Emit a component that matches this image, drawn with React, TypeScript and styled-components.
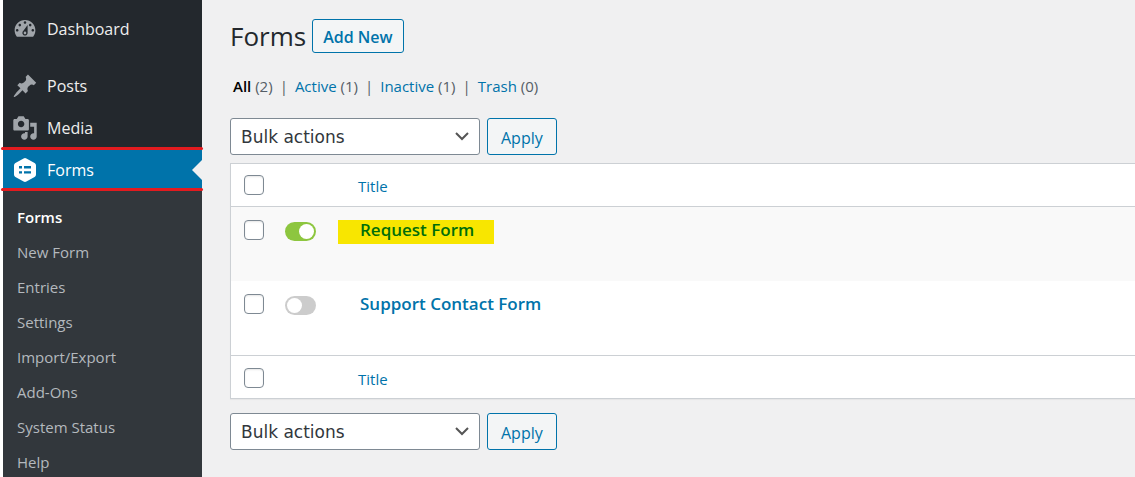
import React from "react";
import styled, { createGlobalStyle, css } from "styled-components";

const blue = "#0073aa";
const line = "#ccd0d4";
const page = "#f0f0f1";

const GlobalStyle = createGlobalStyle`
  *, *::before, *::after { box-sizing: border-box; }
  body {
    margin: 0;
    background: ${page};
    color: #23282d;
    font: 15px/20px "Segoe UI", "Open Sans", "Noto Sans", sans-serif;
  }
  a { color: inherit; text-decoration: none; }
  ul { list-style: none; margin: 0; padding: 0; }
`;

const Shell = styled.div`
  display: flex;
  min-height: 100vh;
`;

const Sidebar = styled.nav`
  display: flex;
  flex-direction: column;
  flex: 0 0 202px;
  border-left: 3px solid #fff;
  background: #23282d;
`;

const Menu = styled.ul`
  padding-top: 8px;
`;

const MenuItem = styled.li<{ $spaced?: boolean }>`
  margin-bottom: ${(p) => (p.$spaced ? 15 : 0)}px;
`;

const MenuLink = styled.a<{ $current?: boolean }>`
  position: relative;
  display: flex;
  align-items: center;
  gap: 9px;
  height: 42px;
  padding-left: 9px;
  color: #eee;
  font-size: 16px;

  svg {
    width: 26px;
    height: 26px;
    fill: #a0a5aa;
  }

  ${(p) =>
    p.$current &&
    css`
      background: ${blue};
      color: #fff;
      svg { fill: #fff; }
    `}
`;

const Notch = styled.span`
  position: absolute;
  right: 0;
  top: 11px;
  border: 10px solid transparent;
  border-left-width: 0;
  border-right-color: ${page};
`;

const Marker = styled.span<{ $edge: "top" | "bottom" }>`
  position: absolute;
  left: -2px;
  right: -1px;
  ${(p) => p.$edge}: ${(p) => (p.$edge === "top" ? -2 : 0)}px;
  height: 3px;
  border-radius: 2px;
  background: #e21b1f;
`;

const SubMenu = styled.ul`
  display: flex;
  flex: 1;
  flex-direction: column;
  gap: 14px;
  padding: 16px 0 0 14px;
  background: #32373c;
`;

const SubLink = styled.a<{ $current?: boolean }>`
  display: block;
  line-height: 21px;
  color: ${(p) => (p.$current ? "#fff" : "#b4b9be")};
  font-weight: ${(p) => (p.$current ? 600 : 400)};
`;

const Content = styled.main`
  flex: 1;
  min-width: 0;
  padding: 19px 0 0 28px;
`;

const Heading = styled.header`
  display: flex;
  align-items: center;
  gap: 6px;
`;

const Title = styled.h1`
  margin: 0;
  font-size: 26px;
  font-weight: 400;
  line-height: 34px;
`;

const OutlineButton = styled.button<{ $strong?: boolean }>`
  height: ${(p) => (p.$strong ? 34 : 37)}px;
  padding: 2px ${(p) => (p.$strong ? 10 : 13)}px 0;
  border: 1px solid ${blue};
  border-radius: 3px;
  background: #f3f5f6;
  color: ${blue};
  font: ${(p) => (p.$strong ? 600 : 400)} 16px/20px "Segoe UI", "Open Sans", "Noto Sans", sans-serif;
`;

const Filters = styled.ul`
  display: flex;
  margin: 23px 0 22px;
  padding-left: 3px;
  font-size: 15px;
`;

const Filter = styled.li`
  color: #555d66;
  &:not(:last-child)::after {
    content: "|";
    margin: 0 7px;
  }
`;

const FilterLink = styled.a<{ $current?: boolean }>`
  color: ${(p) => (p.$current ? "#000" : blue)};
  font-weight: ${(p) => (p.$current ? 600 : 400)};
`;

const Actions = styled.div`
  display: flex;
  gap: 7px;
`;

const SelectBox = styled.div`
  position: relative;
  width: 250px;

  svg {
    position: absolute;
    right: 10px;
    top: 10px;
    pointer-events: none;
  }
`;

const Select = styled.select`
  appearance: none;
  width: 100%;
  height: 37px;
  padding: 0 32px 0 10px;
  border: 1px solid #7e8993;
  border-radius: 3px;
  background: #fff;
  color: #32373c;
  font: 17px/24px Verdana, "DejaVu Sans", sans-serif;
`;

const Table = styled.table`
  width: 100%;
  margin: 8px 0 14px;
  border: 1px solid ${line};
  border-right: 0;
  border-spacing: 0;
  background: #fff;
  table-layout: fixed;
  box-shadow: 0 1px 1px rgba(0, 0, 0, 0.04);

  th, td { padding: 0; text-align: left; font-weight: 400; }
  thead th { height: 43px; border-bottom: 1px solid ${line}; }
  tfoot th { height: 43px; padding-top: 1px; border-top: 1px solid ${line}; }
  tbody td { height: 74px; padding-top: 13px; vertical-align: top; }
  tbody tr:nth-child(odd) { background: #f9f9f9; }
`;

const CheckCol = styled.col`
  width: 54px;
`;
const ToggleCol = styled.col`
  width: 53px;
`;

const Checkbox = styled.input`
  appearance: none;
  display: block;
  width: 20px;
  height: 20px;
  margin: 0 0 0 13px;
  border: 1px solid #7e8993;
  border-radius: 4px;
  background: #fff;
  box-shadow: inset 0 1px 2px rgba(0, 0, 0, 0.1);
`;

const Toggle = styled.input`
  appearance: none;
  display: block;
  width: 31px;
  height: 19px;
  margin: 2px 0 0;
  padding: 2px;
  border-radius: 10px;
  background: #ccc;

  &::before {
    content: "";
    display: block;
    width: 15px;
    height: 15px;
    border-radius: 50%;
    background: #fff;
  }
  &:checked { background: #8dc63f; }
  &:checked::before { margin-left: auto; }
`;

const ColumnLink = styled.a`
  display: block;
  padding: 2px 0 0 20px;
  color: ${blue};
`;

const FormLink = styled.a<{ $highlight?: boolean }>`
  display: inline-block;
  padding: 0 20px 4px 22px;
  background: ${(p) => (p.$highlight ? "#f8e600" : "transparent")};
  color: ${(p) => (p.$highlight ? "#006e0a" : blue)};
  font-size: 17px;
  font-weight: 600;
`;

const DashboardIcon = () => (
  <svg viewBox="0 0 20 20" aria-hidden="true">
    <path fillRule="evenodd" d="M3.76 16h12.48c1.1-1.37 1.76-3.11 1.76-5 0-4.42-3.58-8-8-8s-8 3.58-8 8c0 1.89.66 3.63 1.76 5zM10 4c.55 0 1 .45 1 1s-.45 1-1 1-1-.45-1-1 .45-1 1-1zM6 6c.55 0 1 .45 1 1s-.45 1-1 1-1-.45-1-1 .45-1 1-1zm8 0c.55 0 1 .45 1 1s-.45 1-1 1-1-.45-1-1 .45-1 1-1zm-5.37 5.55L12 7v6c0 1.1-.9 2-2 2s-2-.9-2-2c0-.57.24-1.08.63-1.45zM4 10c.55 0 1 .45 1 1s-.45 1-1 1-1-.45-1-1 .45-1 1-1zm12 0c.55 0 1 .45 1 1s-.45 1-1 1-1-.45-1-1 .45-1 1-1zm-5 3c0-.55-.45-1-1-1s-1 .45-1 1 .45 1 1 1 1-.45 1-1z" />
  </svg>
);

const PinIcon = () => (
  <svg viewBox="0 0 20 20" aria-hidden="true">
    <path d="M10.44 3.02l1.82-1.82 6.36 6.35-1.83 1.82c-1.05-.68-2.48-.57-3.41.36l-.75.75c-.92.93-1.04 2.35-.35 3.41l-1.83 1.82-2.41-2.41-2.8 2.79c-.42.42-3.38 2.71-3.8 2.29s1.86-3.39 2.28-3.81l2.79-2.79L4.1 9.36l1.83-1.82c1.05.69 2.48.57 3.4-.36l.75-.75c.93-.92 1.05-2.35.36-3.41z" />
  </svg>
);

const MediaIcon = () => (
  <svg viewBox="0 0 20 20" aria-hidden="true">
    <path fillRule="evenodd" d="M13 11V4c0-.55-.45-1-1-1h-1.67L9 1H5L3.67 3H2c-.55 0-1 .45-1 1v7c0 .55.45 1 1 1h10c.55 0 1-.45 1-1zM7 4.5c1.38 0 2.5 1.12 2.5 2.5S8.38 9.5 7 9.5 4.5 8.38 4.5 7 5.62 4.5 7 4.5zM14 6h5v10.5c0 1.38-1.12 2.5-2.5 2.5S14 17.88 14 16.5s1.12-2.5 2.5-2.5c.17 0 .34.02.5.05V9h-3V6zm-4 8.05V13h2v3.5c0 1.38-1.12 2.5-2.5 2.5S7 17.88 7 16.5 8.12 14 9.5 14c.17 0 .34.02.5.05z" />
  </svg>
);

const FormsIcon = () => (
  <svg viewBox="0 0 26 26" aria-hidden="true">
    <path d="M11.6 1.4q1.4-.8 2.8 0l8.2 4.7q1.4.8 1.4 2.4v9q0 1.6-1.4 2.4l-8.2 4.7q-1.4.8-2.8 0l-8.2-4.7Q2 19.100 2 17.500v-9q0-1.600 1.400-2.400z" />
    <path fill={blue} d="M7 9h3v2.400H7zM12 9h7v2.400h-7zM7 14.200h3v2.400H7zM12 14.200h7v2.400h-7z" />
  </svg>
);

const submenu = ["Forms", "New Form", "Entries", "Settings", "Import/Export", "Add-Ons", "System Status", "Help"];

const filters = [
  { label: "All", count: 2 },
  { label: "Active", count: 1 },
  { label: "Inactive", count: 1 },
  { label: "Trash", count: 0 },
];

const forms = [
  { name: "Request Form", active: true },
  { name: "Support Contact Form", active: false },
];

const BulkActions = () => (
  <Actions>
    <SelectBox>
      <Select aria-label="Select bulk action">
        <option>Bulk actions</option>
      </Select>
      <svg width="16" height="16" viewBox="0 0 16 16" fill="none" stroke="#555" strokeWidth="2" aria-hidden="true">
        <path d="M2 5l6 6 6-6" />
      </svg>
    </SelectBox>
    <OutlineButton type="button">Apply</OutlineButton>
  </Actions>
);

const ColumnHeads = () => (
  <tr>
    <th>
      <Checkbox type="checkbox" aria-label="Select all" />
    </th>
    <th />
    <th>
      <ColumnLink href="#title">Title</ColumnLink>
    </th>
  </tr>
);

export default function App() {
  return (
    <>
      <GlobalStyle />
      <Shell>
        <Sidebar>
          <Menu>
            <MenuItem $spaced>
              <MenuLink href="#dashboard"><DashboardIcon />Dashboard</MenuLink>
            </MenuItem>
            <MenuItem>
              <MenuLink href="#posts"><PinIcon />Posts</MenuLink>
            </MenuItem>
            <MenuItem>
              <MenuLink href="#media"><MediaIcon />Media</MenuLink>
            </MenuItem>
            <MenuItem>
              <MenuLink href="#forms" $current>
                <FormsIcon />Forms
                <Notch />
                <Marker $edge="top" />
                <Marker $edge="bottom" />
              </MenuLink>
            </MenuItem>
          </Menu>
          <SubMenu>
            {submenu.map((name, i) => (
              <li key={name}>
                <SubLink href="#submenu" $current={i === 0}>{name}</SubLink>
              </li>
            ))}
          </SubMenu>
        </Sidebar>
        <Content>
          <Heading>
            <Title>Forms</Title>
            <OutlineButton type="button" $strong>Add New</OutlineButton>
          </Heading>
          <Filters>
            {filters.map((f, i) => (
              <Filter key={f.label}>
                <FilterLink href="#filter" $current={i === 0}>{f.label}</FilterLink> ({f.count})
              </Filter>
            ))}
          </Filters>
          <BulkActions />
          <Table>
            <colgroup>
              <CheckCol />
              <ToggleCol />
              <col />
            </colgroup>
            <thead><ColumnHeads /></thead>
            <tbody>
              {forms.map((f) => (
                <tr key={f.name}>
                  <td><Checkbox type="checkbox" aria-label={`Select ${f.name}`} /></td>
                  <td><Toggle type="checkbox" role="switch" aria-label={`${f.name} active`} defaultChecked={f.active} /></td>
                  <td><FormLink href="#form" $highlight={f.active}>{f.name}</FormLink></td>
                </tr>
              ))}
            </tbody>
            <tfoot><ColumnHeads /></tfoot>
          </Table>
          <BulkActions />
        </Content>
      </Shell>
    </>
  );
}
